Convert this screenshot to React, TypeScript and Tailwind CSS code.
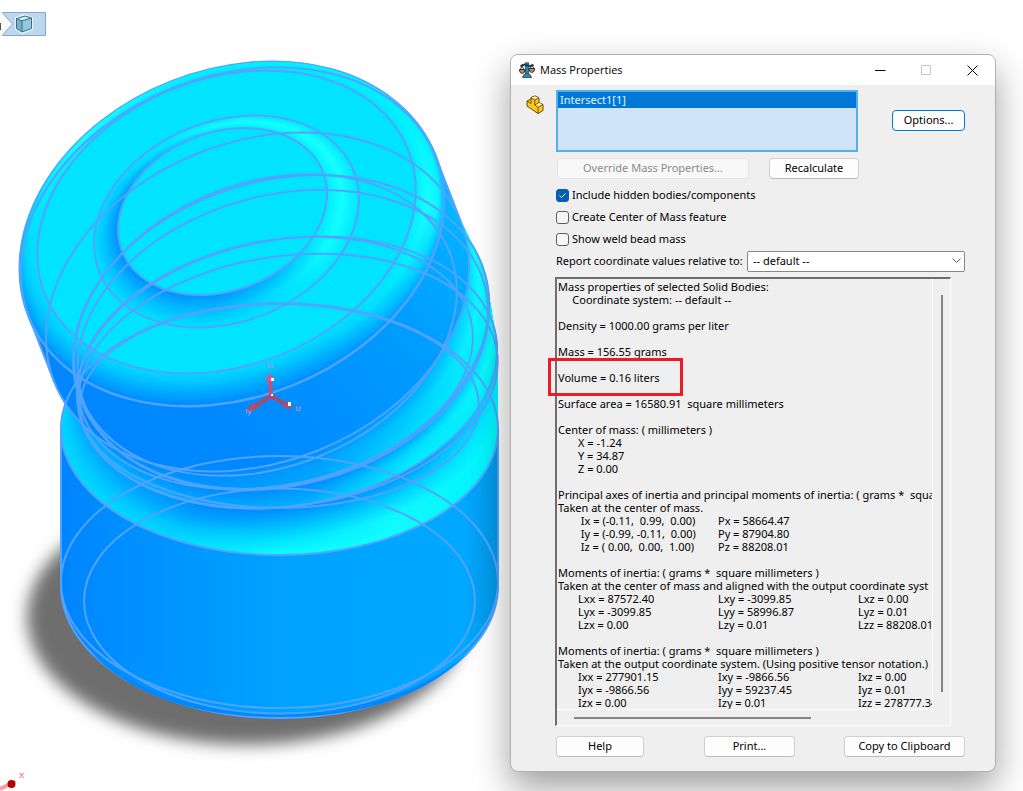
import { useId, useState } from "react"

type Ring = { cx: number, cy: number, a: number, b: number, rot: number }

const EDGE = "#50a4ff"

// rings of the solid, from the base up to the tilted cap
const base: Ring = { cx: 279.5, cy: 582, a: 218.5, b: 126, rot: 0 }
const baseInner: Ring = { cx: 279.5, cy: 601, a: 195.5, b: 112.5, rot: 0 }
const shoulder: Ring = { cx: 279.5, cy: 429, a: 218.5, b: 126, rot: 0 }
const shoulderInner: Ring = { cx: 279.5, cy: 406, a: 199.5, b: 102, rot: 0 }
const ridge2: Ring = { cx: 287, cy: 372.5, a: 212, b: 133, rot: -10 }
const ridge2Low: Ring = { cx: 288, cy: 381, a: 211, b: 125, rot: -8 }
const groove2: Ring = { cx: 275.5, cy: 363, a: 200, b: 122, rot: -11.8 }
const ridge1: Ring = { cx: 281, cy: 332, a: 212, b: 151.5, rot: -16 }
const ridge1Low: Ring = { cx: 283, cy: 340, a: 209, b: 145, rot: -15 }
const groove1: Ring = { cx: 265.5, cy: 325, a: 198, b: 142, rot: -21.6 }
const capLow: Ring = { cx: 257.6, cy: 302, a: 218.5, b: 160.3, rot: -21.6 }
const capSide: Ring = { cx: 232.3, cy: 236.6, a: 218.5, b: 160.3, rot: -21.6 }
const capFace: Ring = { cx: 226.5, cy: 222, a: 195.5, b: 143.4, rot: -21.6 }
const dishOuter: Ring = { cx: 226.5, cy: 221.5, a: 136.8, b: 100.4, rot: -21.6 }
const dishInner: Ring = { cx: 222.5, cy: 211.5, a: 108, b: 79, rot: -21.6 }

const edges = [
    base, baseInner, shoulder, shoulderInner, ridge2, ridge2Low, groove2,
    ridge1, ridge1Low, groove1, capLow, capSide, capFace, dishOuter, dishInner
]

function mix(from: number, to: number, f: number) {
    return from + (to - from) * f
}

function mixRing(from: Ring, to: Ring, f: number): Ring {
    return {
        cx: mix(from.cx, to.cx, f),
        cy: mix(from.cy, to.cy, f),
        a: mix(from.a, to.a, f),
        b: mix(from.b, to.b, f),
        rot: mix(from.rot, to.rot, f)
    }
}

function mixColor(from: string, to: string, f: number) {
    const channel = (hex: string, i: number) => parseInt(hex.slice(1 + i * 2, 3 + i * 2), 16)
    return `rgb(${[0, 1, 2].map(i => Math.round(mix(channel(from, i), channel(to, i), f))).join(",")})`
}

// rows run from the outer ring to the inner one, each row holds colours from left to right
function colorAt(rows: string[][], f: number, stop: number) {
    const pos = f * (rows.length - 1)
    const i = Math.min(Math.floor(pos), rows.length - 2)
    return mixColor(rows[i][stop], rows[i + 1][stop], pos - i)
}

function Ellipse({ ring, ...rest }: { ring: Ring } & React.SVGProps<SVGEllipseElement>) {
    return <ellipse cx={ring.cx} cy={ring.cy} rx={ring.a} ry={ring.b} transform={`rotate(${ring.rot} ${ring.cx} ${ring.cy})`} {...rest} />
}

type BandProps = { at: (f: number) => Ring, rows: string[][], steps?: number, dir?: number[] }

function Band({ at, rows, steps = 28, dir = [0, 0, 1, 0] }: BandProps) {
    const id = useId()
    return <>
        {Array.from({ length: steps + 1 }, (_, i) => {
            const f = i / steps
            return <g key={i}>
                <linearGradient id={`${id}${i}`} x1={dir[0]} y1={dir[1]} x2={dir[2]} y2={dir[3]}>
                    {rows[0].map((_, s) => <stop key={s} offset={s / (rows[0].length - 1)} stopColor={colorAt(rows, f, s)} />)}
                </linearGradient>
                <Ellipse ring={at(f)} fill={`url(#${id}${i})`} />
            </g>
        })}
    </>
}

// quarter round between the side of the cap and its flat face
function capFillet(f: number): Ring {
    const phi = (1 - f) * Math.PI / 2
    const t = 15.7 * (1 - Math.cos(phi))
    return { cx: 226.5 + 0.368 * t, cy: 222 + 0.93 * t, a: 195.5 + 23 * Math.sin(phi), b: 143.4 + 16.9 * Math.sin(phi), rot: -21.6 }
}

function Model() {
    return <svg className="absolute left-0 top-0" width="520" height="791" viewBox="0 0 520 791" role="img" aria-label="Solid body">
        <defs>
            <filter id="soft" x="-20%" y="-20%" width="140%" height="140%"><feGaussianBlur stdDeviation="8" /></filter>
            <linearGradient id="wall" x1="61" x2="498" y1="0" y2="0" gradientUnits="userSpaceOnUse">
                <stop offset="0" stopColor="#0084ff" />
                <stop offset="0.14" stopColor="#008fff" />
                <stop offset="0.5" stopColor="#00a2ff" />
                <stop offset="0.92" stopColor="#00a8ff" />
                <stop offset="1" stopColor="#0096e6" />
            </linearGradient>
            <linearGradient id="capWall" x1="60" x2="470" y1="400" y2="240" gradientUnits="userSpaceOnUse">
                <stop offset="0" stopColor="#0086ff" />
                <stop offset="0.3" stopColor="#008aff" />
                <stop offset="0.7" stopColor="#009cff" />
                <stop offset="0.9" stopColor="#00adff" />
                <stop offset="1" stopColor="#00b8ff" />
            </linearGradient>
        </defs>

        <ellipse cx="247" cy="617" rx="220" ry="128" fill="#6e6e6e" filter="url(#soft)" />

        <path d="M61 429V586A218.500 132 0 0 0 498 586V429Z" fill="url(#wall)" stroke={EDGE} strokeWidth="2" />
        <path d="M90 652C135 692 205 713.500 279.500 713.500S424 692 469 652C424 698 360 717 279.500 717S135 698 90 652Z" fill="#0088ff" />

        <Band
            at={f => mixRing(shoulder, ridge2, f)}
            rows={[
                ["#00d8ff", "#00d8ff", "#10fcff", "#10fcff", "#00f0f8"],
                ["#00d0ff", "#00c4ff", "#00e0ff", "#10f8ff", "#00f4fc"],
                ["#00c0ff", "#00a0ff", "#00b4ff", "#00ccff", "#00f0ff"],
                ["#00a8ff", "#0088ff", "#0088ff", "#0090ff", "#00e0ff"]
            ]}
        />
        <Ellipse ring={ridge2} fill="none" stroke={EDGE} strokeWidth="2" />
        <Band
            at={f => mixRing(ridge2, ridge1, f)}
            rows={[
                ["#00c8ff", "#00a8ff", "#00b4ff", "#00f0ff", "#00ecf4"],
                ["#00a8ff", "#0098ff", "#00a0ff", "#00dcff", "#10ffff"],
                ["#0090ff", "#0088ff", "#0088ff", "#0098ff", "#00ecff"]
            ]}
        />
        <Ellipse ring={ridge1} fill="none" stroke={EDGE} strokeWidth="2" />
        <Band
            at={f => mixRing(ridge1, capLow, f)}
            rows={[
                ["#0098ff", "#0098ff", "#00a8ff", "#00dcff", "#00f4f8"],
                ["#0090ff", "#0090ff", "#00a0ff", "#00ccff", "#10ffff"],
                ["#0088ff", "#0088ff", "#0090ff", "#00a0ff", "#00e4ff"]
            ]}
        />

        <Ellipse ring={capLow} fill="url(#capWall)" />
        <path d="M29 317L54.400 382.400L460.800 221.600L435.500 156.200Z" fill="url(#capWall)" />
        <path d="M29 317L54.400 382.400M435.500 156.200L460.800 221.600" stroke={EDGE} strokeWidth="2" />

        {[0, 0.15, 0.3, 0.45].map(f => <Ellipse key={f} ring={capFillet(f)} fill="none" stroke={EDGE} strokeWidth="3" />)}
        <Band
            at={capFillet}
            dir={[0.15, 0.95, 0.8, 0.2]}
            rows={[
                ["#0088ff", "#008cff", "#00a0ff", "#00b8ff", "#00c4ff"],
                ["#00a0ff", "#00a8ff", "#00c8ff", "#10f4ff", "#00f0ff"],
                ["#00c0ff", "#00c8ff", "#00e8ff", "#18ffff", "#00f0ff"],
                ["#00dcff", "#00e0ff", "#00e5ff", "#00ecff", "#00e5ff"]
            ]}
        />
        <Ellipse ring={capFace} fill="#00e4ff" />
        <Band
            at={f => mixRing(dishOuter, dishInner, f)}
            dir={[0, 0.75, 1, 0.45]}
            rows={[
                ["#00e0ff", "#00e0ff", "#00e4ff", "#00e8ff", "#00e6ff"],
                ["#00bcff", "#00bcff", "#00e0ff", "#10fcff", "#18ffff"],
                ["#008cff", "#0094ff", "#00b4ff", "#00e4ff", "#00f0ff"]
            ]}
        />
        <Ellipse ring={dishInner} fill="#00e4ff" />

        {edges.map((ring, i) => <Ellipse key={i} ring={ring} fill="none" stroke={EDGE} strokeWidth="2" />)}

        <g stroke="#c2507e" strokeWidth="4" fill="none">
            <path d="M271 396L270 380" />
            <path d="M271 396L254 407M271 396L290 407" stroke="#a84a6c" />
        </g>
        <path d="M270 373L265 380Q270 384 275 380Z" fill="#d0588c" />
        <path d="M246 411L252 403L258 407L256 410Z" fill="#b84c66" />
        <path d="M283 408L288 401L293 408Z" fill="#b84c66" />
        <path d="M271 378h3v3h-3zM288 402h3v4h-3zM271 394h2v2h-2z" fill="#fff" />
        <g fill="#d888cc" fontFamily="Liberation Sans, sans-serif" fontSize="8">
            <text x="267" y="368">Ix</text>
            <text x="245" y="414">Iy</text>
            <text x="295" y="411">Iz</text>
        </g>

        <path d="M0 789L10 784" stroke="#ff9c9c" strokeWidth="4" />
        <path d="M10 784L16 781" stroke="#ffc4c4" strokeWidth="2" />
        <circle cx="11.500" cy="784" r="4" fill="#b40000" />
        <text x="19" y="778" fill="#ff4040" fontFamily="Liberation Sans, sans-serif" fontSize="8">X</text>
    </svg>
}

function Breadcrumb() {
    return <nav aria-label="Selection" className="relative">
        <button aria-label="Body" className="block mt-3">
            <svg width="46" height="24" viewBox="0 0 46 24">
                <path d="M0 .5H45.500V23.500H0Z" fill="#bdd7ec" stroke="#86a5ce" />
                <path d="M0 0H2L12.500 12L2 24H0Z" fill="#fafafc" />
                <path d="M2 .5L12.500 12L2 23.500" fill="none" stroke="#86a5ce" />
                <path d="M0 11h1v7H0z" fill="#6a5038" />
                <path d="M16 6L24 3L32 6V17L22 21L16 17Z" fill="#7db4cc" stroke="#e8f6fa" strokeWidth="2" strokeLinejoin="round" />
                <path d="M16.500 6.500L25 4L31.500 6L22 9Z" fill="#c8ecf4" />
                <path d="M16.500 6.500L22 9V20L16.500 16.500Z" fill="#78b0c8" />
                <path d="M22 9L31.500 6V16.500L22 20Z" fill="#94c8dc" />
                <path d="M16.500 6.500L25 4L31.500 6V16.500L22 20L16.500 16.500ZM16.500 6.500L22 9L31.500 6M22 9V20" fill="none" stroke="#356e84" />
            </svg>
        </button>
    </nav>
}

function ScaleIcon() {
    return <svg width="16" height="16" viewBox="0 0 16 16">
        <path d="M6.500 .8h3v11.200h-3z" fill="#2e86b8" stroke="#1c4560" strokeWidth=".8" />
        <path d="M3.500 15.500Q4 12 8 11Q12 12 12.500 15.500Z" fill="#2e86b8" stroke="#1c4560" strokeWidth=".8" />
        <path d="M1.500 4.500Q5 1.500 8 3.200Q11 5 14.500 2.800" fill="none" stroke="#1c4560" strokeWidth="2.200" />
        <path d="M3 4L.8 8.500M3 4L5.500 8.500M13 3L10.600 7.500M13 3L15.300 7.500" stroke="#333" strokeWidth="1" />
        <path d="M.4 7.500h5.600Q5.800 11.500 3.200 11.500T.4 7.500ZM10 6.500h5.600Q15.400 10.500 12.800 10.500T10 6.500Z" fill="#b8935c" stroke="#33302c" />
    </svg>
}

function PartIcon() {
    return <svg width="20" height="20" viewBox="0 0 20 20">
        <path d="M2 6L6 4L6 2.500L10 .8L14 3V7.500L18 9.500V15.500L13 18.500L2 11Z" fill="#f8c81c" stroke="#6b4c0c" strokeLinejoin="round" />
        <path d="M6 3L10 1.300L13.500 3.200L9.800 5Z" fill="#fff09c" />
        <path d="M9.500 10L14 7.800L17.500 9.600L13 12Z" fill="#fff09c" />
        <path d="M2 6L6 8.500V3L9.800 5V10L13 12.300V18.500M9.800 5L14 3M9.800 10L14 7.500M13 12.300L18 9.500" fill="none" stroke="#6b4c0c" strokeWidth=".9" />
    </svg>
}

function Check({ label, initial = false }: { label: string, initial?: boolean }) {
    const [checked, setChecked] = useState(initial)
    return <label className="flex items-center gap-[3px] h-[22px]">
        <span className="grid h-[13px] w-[13px]">
            <input
                type="checkbox"
                checked={checked}
                onChange={e => setChecked(e.target.checked)}
                className="col-start-1 row-start-1 appearance-none h-[13px] w-[13px] rounded-[3px] border border-[#5f5f5f] bg-[#f6f6f6] checked:border-[#005fb8] checked:bg-[#005fb8]"
            />
            {checked && <svg className="col-start-1 row-start-1 pointer-events-none" width="13" height="13" viewBox="0 0 13 13">
                <path d="M3.500 6.500L5.500 8.500L9.500 4.500" fill="none" stroke="#fff" />
            </svg>}
        </span>
        {label}
    </label>
}

const pushButton = "h-[21px] rounded-[4px] border border-[#d0d0d0] border-b-[#bcbcbc] bg-[#fdfdfd]"

// a string is a full line, an array is a row of tabbed values
const report: (string | string[])[] = [
    "Mass properties of selected Solid Bodies:",
    "     Coordinate system: -- default --",
    "",
    "Density = 1000.00 grams per liter",
    "",
    "Mass = 156.55 grams",
    "",
    "Volume = 0.16 liters",
    "",
    "Surface area = 16580.91  square millimeters",
    "",
    "Center of mass: ( millimeters )",
    ["X = -1.24"],
    ["Y = 34.87"],
    ["Z = 0.00"],
    "",
    "Principal axes of inertia and principal moments of inertia: ( grams *  squa",
    "Taken at the center of mass.",
    [" Ix = (-0.11,  0.99,  0.00)", "Px = 58664.47"],
    [" Iy = (-0.99, -0.11,  0.00)", "Py = 87904.80"],
    [" Iz = ( 0.00,  0.00,  1.00)", "Pz = 88208.01"],
    "",
    "Moments of inertia: ( grams *  square millimeters )",
    "Taken at the center of mass and aligned with the output coordinate syst",
    ["Lxx = 87572.40", "Lxy = -3099.85", "Lxz = 0.00"],
    ["Lyx = -3099.85", "Lyy = 58996.87", "Lyz = 0.01"],
    ["Lzx = 0.00", "Lzy = 0.01", "Lzz = 88208.01"],
    "",
    "Moments of inertia: ( grams *  square millimeters )",
    "Taken at the output coordinate system. (Using positive tensor notation.)",
    ["Ixx = 277901.15", "Ixy = -9866.56", "Ixz = 0.00"],
    ["Iyx = -9866.56", "Iyy = 59237.45", "Iyz = 0.01"],
    ["Izx = 0.00", "Izy = 0.01", "Izz = 278777.34"]
]

function Report() {
    return <div className="relative mt-[5px] -ml-px mr-[14px]">
        <div className="border-2 border-t-[#6e6e6e] border-l-[#6e6e6e] border-r border-b border-r-white border-b-white h-[449px] flex flex-col overflow-hidden">
            <div className="flex flex-1 min-h-0">
                <div className="flex-1 min-w-0 overflow-hidden whitespace-pre leading-[13px] pl-px pt-px border-r border-b border-white">
                    {report.map((line, i) => typeof line === "string"
                        ? <p key={i} className="h-[13px]">{line}</p>
                        : <div key={i} className="flex h-[13px] pl-5">
                            {line.map(cell => <span key={cell} className="w-[140px] shrink-0">{cell}</span>)}
                        </div>)}
                </div>
                <div className="w-[17px] pt-4 pb-[18px] flex justify-center">
                    <div className="w-[2px] bg-[#868686]"></div>
                </div>
            </div>
            <div className="h-[15px] flex items-center pl-[17px]">
                <div className="h-[2px] w-[237px] bg-[#868686]"></div>
            </div>
        </div>
        <div className="absolute -left-[7px] top-[81px] w-[135px] h-[38px] border-3 border-[#ed1c24]"></div>
    </div>
}

function MassProperties() {
    return <section aria-label="Mass Properties" className="absolute right-[27px] top-[54px] w-[486px] rounded-lg border border-[#b0b0b0] bg-[#efefef] overflow-hidden shadow-[0_16px_36px_rgba(0,0,0,0.38)]">
        <header className="flex items-center h-[30px] bg-white pl-2">
            <ScaleIcon />
            <h1 className="ml-[5px] flex-1 font-['Open_Sans',sans-serif]">Mass Properties</h1>
            <button aria-label="Minimize" className="w-[46px] h-full grid place-items-center">
                <svg width="11" height="11" viewBox="0 0 11 11"><path d="M0 5.500h10.500" stroke="#000" /></svg>
            </button>
            <button aria-label="Maximize" disabled className="w-[46px] h-full grid place-items-center">
                <svg width="11" height="11" viewBox="0 0 11 11"><path d="M.5 .5h9v9h-9z" fill="none" stroke="#c8c8c8" /></svg>
            </button>
            <button aria-label="Close" className="w-[46px] h-full grid place-items-center">
                <svg width="11" height="11" viewBox="0 0 11 11"><path d="M.5 .5l10 10M10.500 .5l-10 10" stroke="#000" /></svg>
            </button>
        </header>
        <div className="flex pt-[5px] pb-[14px]">
            <div className="w-[45px] shrink-0 pl-[14px] pt-[5px]"><PartIcon /></div>
            <div className="flex-1 min-w-0 pr-[30px]">
                <div className="flex items-start">
                    <ul aria-label="Selected items" className="w-[303px] h-[62px] border-2 border-[#53b0e8] bg-[#cfe4f9]">
                        <li className="h-4 leading-4 pl-[2px] bg-[#0078d7] text-[#e4f2ff]">Intersect1[1]</li>
                    </ul>
                    <button className="ml-[34px] mt-[20px] w-[73px] h-[21px] rounded-[4px] border border-[#0078d4] bg-[#fdfdfd]">Options...</button>
                </div>
                <div className="flex mt-[6px] pl-px mb-[5px]">
                    <button disabled className="w-[192px] h-[21px] rounded-[4px] border border-[#e4e4e4] bg-[#f8f8f8] text-[#8a8a8a]">Override Mass Properties...</button>
                    <button className={`${pushButton} w-[90px] ml-5`}>Recalculate</button>
                </div>
                <Check label="Include hidden bodies/components" initial />
                <Check label="Create Center of Mass feature" />
                <Check label="Show weld bead mass" />
                <div className="flex items-center h-[22px]">
                    <label htmlFor="origin" className="w-[191px] whitespace-nowrap">Report coordinate values relative to:</label>
                    <div className="grid flex-1 items-center">
                        <select id="origin" className="col-start-1 row-start-1 appearance-none h-[21px] w-full border border-[#868686] rounded-[2px] bg-white pl-[5px]">
                            <option>-- default --</option>
                        </select>
                        <svg className="col-start-1 row-start-1 justify-self-end mr-1 pointer-events-none" width="9" height="6" viewBox="0 0 9 6">
                            <path d="M.5 .5L4.500 4.500L8.500 .5" fill="none" stroke="#5a5a5a" />
                        </svg>
                    </div>
                </div>
                <Report />
                <div className="flex mt-[10px]">
                    <button className={`${pushButton} w-[88px]`}>Help</button>
                    <button className={`${pushButton} w-[91px] ml-[60px]`}>Print...</button>
                    <button className={`${pushButton} w-[121px] ml-auto`}>Copy to Clipboard</button>
                </div>
            </div>
        </div>
    </section>
}

export default function App() {
    return <main className="relative min-h-screen overflow-hidden bg-white text-black text-[11px] font-['Noto_Sans',sans-serif]">
        <Model />
        <Breadcrumb />
        <MassProperties />
    </main>
}
